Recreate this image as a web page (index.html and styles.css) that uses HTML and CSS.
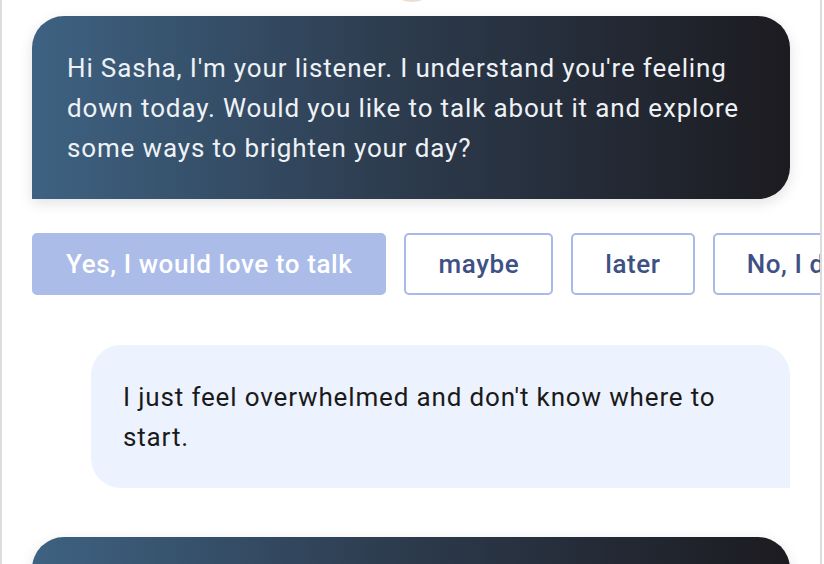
FILE: index.html
```html
<!DOCTYPE html>
<html lang="en">
  <head>
    <meta charset="UTF-8" />
    <meta name="viewport" content="width=device-width, initial-scale=1.0" />
    <title>Listener Chat</title>
    <link rel="stylesheet" href="styles.css">
  </head>
  <body>
    <div class="chat">
      <div class="avatar"></div>
      <div class="bubble bot">
        Hi Sasha, I'm your listener. I understand you're feeling down today. Would you like to talk about it and explore some ways to brighten your day?
      </div>
      <div class="options">
        <button class="option primary">Yes, I would love to talk</button>
        <button class="option">maybe</button>
        <button class="option">later</button>
        <button class="option">No, I don't want to</button>
      </div>
      <div class="bubble user">
        I just feel overwhelmed and don't know where to start.
      </div>
      <div class="bubble bot">
        That's completely understandable. Let's take it one small step at a time.
      </div>
    </div>
  </body>
</html>
```
FILE: styles.css
```css
body {
  margin: 0;
  font-family: Roboto, "Liberation Sans", sans-serif;
  background-color: #fff;
}
.chat {
  width: 822px;
  height: 564px;
  border-left: 2px solid #dcdcdc;
  border-right: 2px solid #dcdcdc;
  padding: 16px 30px 0 30px;
  box-sizing: border-box;
  overflow: hidden;
  position: relative;
}
.avatar {
  position: absolute;
  top: -58px;
  left: 380px;
  width: 60px;
  height: 60px;
  border-radius: 50%;
  background-color: #eadfd5;
}
.bubble {
  font-size: 26px;
  letter-spacing: 0.85px;
  line-height: 40px;
  padding: 32px 35px 31px 35px;
}
.bubble.bot {
  background: linear-gradient(90deg, #3e6282 0%, #2c3a4c 50%, #1c1b20 100%);
  color: #eef2f6;
  border-radius: 32px 32px 32px 0;
  box-shadow: 0 4px 14px rgba(0, 0, 0, 0.12);
  margin-bottom: 34px;
}
.bubble.user {
  background-color: #edf3fe;
  color: #1a1a1a;
  border-radius: 30px 30px 0 30px;
  margin-left: 59px;
  margin-bottom: 49px;
  padding: 32px 32px 31px 32px;
}
.options {
  display: flex;
  gap: 18px;
  margin-bottom: 50px;
  margin-right: -60px;
}
.option {
  flex-shrink: 0;
  height: 62px;
  padding: 0 32px;
  font-family: Roboto, "Liberation Sans", sans-serif;
  font-size: 26px;
  letter-spacing: 0.6px;
  font-weight: 500;
  color: #3e5184;
  background-color: #fff;
  border: 2px solid #a9b9e9;
  border-radius: 5px;
  white-space: nowrap;
}
.option.primary {
  background-color: #abbce9;
  border-color: #abbce9;
  color: #fff;
}
```
